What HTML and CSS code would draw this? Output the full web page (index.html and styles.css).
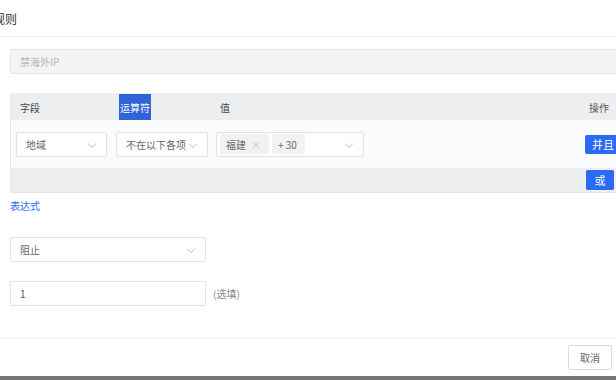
FILE: index.html
```html
<!DOCTYPE html>
<html>
    <head>
        <meta charset="UTF-8" />
        <link rel="stylesheet" href="styles.css">
    </head>
    <body>
        <div class="modal">
            <div class="modal-head">
                <span class="title">规则</span>
            </div>

            <div class="modal-body">
                <div class="input disabled">禁海外IP</div>

                <div class="rules">
                    <div class="rules-head">
                        <span class="col-field">字段</span>
                        <span class="col-op"><span class="mark">运算符</span></span>
                        <span class="col-val">值</span>
                        <span class="col-act">操作</span>
                    </div>
                    <div class="rules-row">
                        <div class="select s-field">地域<i class="arrow"></i></div>
                        <div class="select s-op">不在以下各项<i class="arrow"></i></div>
                        <div class="select s-val">
                            <span class="tag">福建<span class="close">×</span></span>
                            <span class="tag">+ 30</span>
                            <i class="arrow"></i>
                        </div>
                        <div class="col-act"><span class="btn btn-and">并且</span></div>
                    </div>
                    <div class="rules-foot">
                        <div class="col-act"><span class="btn btn-or">或</span></div>
                    </div>
                </div>

                <a class="link">表达式</a>

                <div class="select s-action">阻止<i class="arrow"></i></div>

                <div class="line">
                    <div class="input s-num">1</div>
                    <span class="hint">(选填)</span>
                </div>
            </div>

            <div class="modal-foot">
                <span class="btn-cancel">取消</span>
            </div>
        </div>
        <div class="shade"></div>
    </body>
</html>
```

FILE: styles.css
```css
html, body {
    margin: 0;
    width: 616px;
    height: 380px;
    overflow: hidden;
    background-color: white;
    font-family: "Noto Sans CJK SC", "Noto Sans", sans-serif;
    font-size: 10px;
    color: #666;
}

.modal {
    width: 640px;
    height: 376px;
    display: flex;
    flex-direction: column;
}

.modal-head {
    height: 36px;
    border-bottom: 1px solid #efefef;
    display: flex;
    align-items: center;
}

.title {
    margin-left: -7px;
    font-size: 12px;
    color: #333;
}

.modal-body {
    padding: 12px 10px 0 10px;
    flex: 1;
    display: flex;
    flex-direction: column;
}

.input, .select {
    box-sizing: border-box;
    height: 25px;
    border: 1px solid #e2e2e2;
    border-radius: 2px;
    background-color: white;
    display: flex;
    align-items: center;
    padding-left: 9px;
    position: relative;
    color: #666;
}

.disabled {
    background-color: #f4f4f4;
    border-color: #e4e4e4;
    color: #b4b4b4;
}

.arrow {
    position: absolute;
    right: 11px;
    top: 8px;
    width: 5px;
    height: 5px;
    border-right: 1px solid #cfcfcf;
    border-bottom: 1px solid #cfcfcf;
    transform: rotate(45deg);
}

.rules {
    margin-top: 19px;
    border: 1px solid #e6e6e6;
    border-top-color: #f0f0f0;
    background-color: #eceeef;
}

.rules-head {
    height: 26px;
    display: flex;
    align-items: center;
    color: #444;
}

.col-field {
    width: 99px;
    padding-left: 9px;
}

.col-op {
    width: 101px;
    align-self: stretch;
    display: flex;
}

.mark {
    background-color: #2f63d6;
    color: white;
    display: flex;
    align-items: center;
    padding: 0 1px;
}

.col-val {
    flex: 1;
}

.col-act {
    width: 44px;
    display: flex;
}

.rules-head .col-act {
    color: #555;
    padding-left: 4px;
    box-sizing: border-box;
}

.rules-row {
    height: 48px;
    background-color: #fafbfc;
    display: flex;
    align-items: center;
    padding-left: 5px;
}

.s-field {
    width: 91px;
    margin-right: 9px;
}

.s-op {
    width: 92px;
    margin-right: 8px;
}

.s-val {
    width: 148px;
    padding-left: 3px;
    gap: 3px;
    margin-right: auto;
}

.tag {
    height: 20px;
    background-color: #f1f2f4;
    border-radius: 2px;
    display: flex;
    align-items: center;
    padding: 0 8px 0 6px;
    color: #666;
}

.close {
    margin-left: 5px;
    color: #c4c4c4;
}

.rules-foot {
    height: 24px;
    display: flex;
    align-items: center;
    justify-content: flex-end;
}

.btn {
    background-color: #2b6af5;
    color: white;
    height: 19px;
    border-radius: 2px;
    display: flex;
    align-items: center;
    justify-content: center;
    font-size: 11px;
}

.btn-and {
    width: 36px;
}

.btn-or {
    width: 28px;
    margin-left: 1px;
    height: 20px;
}

.link {
    margin-top: 6px;
    color: #2468f2;
    line-height: 13px;
    width: fit-content;
}

.s-action {
    margin-top: 25px;
    width: 196px;
}

.line {
    margin-top: 19px;
    display: flex;
    align-items: center;
}

.s-num {
    width: 196px;
    color: #555;
}

.hint {
    margin-left: 7px;
    color: #888;
}

.modal-foot {
    height: 38px;
    border-top: 1px solid #f2f2f2;
    display: flex;
    align-items: center;
    padding-right: 4px;
    justify-content: flex-end;
    box-sizing: border-box;
    width: 616px;
}

.btn-cancel {
    box-sizing: border-box;
    width: 44px;
    height: 25px;
    border: 1px solid #dcdcdc;
    border-radius: 2px;
    display: flex;
    align-items: center;
    justify-content: center;
    color: #666;
}

.shade {
    height: 4px;
    background-color: #777;
}
```
